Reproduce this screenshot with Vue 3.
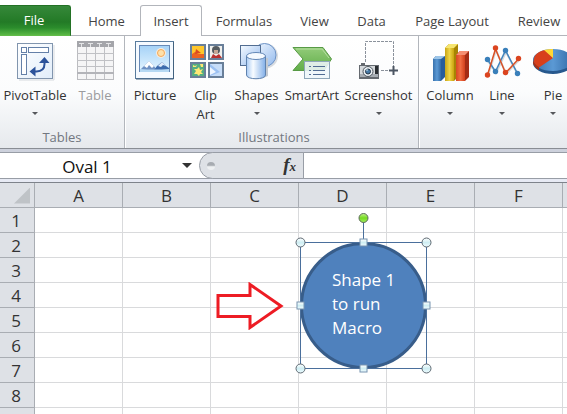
<script setup>
import { ref } from 'vue'

const tabs = ['File', 'Home', 'Insert', 'Formulas', 'View', 'Data', 'Page Layout', 'Review']
const active = ref('Insert')
const shapeName = ref('Oval 1')
const formula = ref('')

const groups = [
  {
    id: 'tables',
    label: 'Tables',
    tools: [
      { id: 'pivot', label: 'PivotTable', menu: true },
      { id: 'table', label: 'Table', disabled: true },
    ],
  },
  {
    id: 'illustrations',
    label: 'Illustrations',
    tools: [
      { id: 'picture', label: 'Picture' },
      { id: 'clip', label: 'Clip\nArt' },
      { id: 'shapes', label: 'Shapes', menu: true },
      { id: 'smart', label: 'SmartArt' },
      { id: 'screenshot', label: 'Screenshot', menu: true },
    ],
  },
  {
    id: 'charts',
    label: '',
    tools: [
      { id: 'column', label: 'Column', menu: true },
      { id: 'line', label: 'Line', menu: true },
      { id: 'pie', label: 'Pie', menu: true },
    ],
  },
]

const columns = ['A', 'B', 'C', 'D', 'E', 'F', '']
const rows = ['1', '2', '3', '4', '5', '6', '7', '8', '']
const corners = [[8, 32], [134, 32], [8, 158], [134, 158]]
const sides = [[71, 32], [8, 95], [134, 95], [71, 158]]
</script>

<template>
  <div class="app">
    <nav class="tabs">
      <button
        v-for="tab in tabs"
        :key="tab"
        type="button"
        class="tab"
        :class="{ file: tab === 'File', active: tab === active }"
        @click="active = tab"
      >{{ tab }}</button>
    </nav>

    <div class="ribbon">
      <section v-for="group in groups" :key="group.id" class="group" :class="group.id">
        <div class="tools">
          <button v-for="tool in group.tools" :key="tool.id" type="button" class="tool" :disabled="tool.disabled">
            <svg class="icon" viewBox="0 0 40 40" aria-hidden="true">
              <g v-if="tool.id === 'pivot'">
                <path d="M4 40h35V5" fill="none" stroke="#d5d9de" />
                <rect x="2.5" y="3.5" width="35" height="35" fill="url(#paper)" stroke="#8195ae" />
                <g fill="#fff" stroke="#6480a8">
                  <rect x="6.5" y="7.5" width="5" height="5" />
                  <rect x="13.5" y="7.5" width="20" height="5" />
                  <rect x="6.5" y="14.5" width="5" height="20" />
                </g>
                <path d="M29.5 20v4q0 7-8 7.5h-2" fill="none" stroke="#2c539b" stroke-width="2" />
                <path d="M24 23l5.5-6 5 6zM20.5 26.5l-6 5 6 5z" fill="#2c539b" />
              </g>
              <g v-else-if="tool.id === 'table'">
                <rect x="2.5" y="1.5" width="36" height="38" fill="#f5f5f6" stroke="#bbbcc0" />
                <path d="M2 1h37v6H2z" fill="#a4a5aa" />
                <path d="M11.5 7v32M20.5 7v32M29.5 7v32M2 13.5h37M2 20.5h37M2 26.5h37" stroke="#c0c1c5" />
                <path d="M2 33h37" stroke="#b3b4b9" stroke-width="2" />
                <path d="M4 3.5h5M13 3.5h5M22 3.5h5M31 3.5h5M6.5 3v4M15.5 3v4M24.5 3v4M33.5 3v4" stroke="#e4e5e7" />
              </g>
              <g v-else-if="tool.id === 'picture'">
                <rect x=".5" y="1.5" width="38" height="37" fill="#f5faff" stroke="#587b9d" />
                <path d="M38.5 2v37H1" fill="none" stroke="#42627f" />
                <rect x="4.5" y="5.5" width="30" height="26" fill="url(#sky)" stroke="#6789b6" />
                <circle cx="26" cy="13" r="5" fill="#f5ede0" />
                <circle cx="26" cy="13" r="3.5" fill="#ffe0a9" stroke="#f5a759" />
                <path d="M5 30l5-5 4-4 4 4 4 5z" fill="#6f91c3" />
                <path d="M9 26l5-5 5 5-2 2-3-3-2 3z" fill="#fff" />
                <path d="M19 30l3-4 5-4 4 4 3 2v2z" fill="#3e6cae" />
                <path d="M23 26l4-4 4 4-3-1-2 2z" fill="#e1ecfb" />
                <path d="M5 29q14 1 29 0v3H5z" fill="#b5d8f2" />
              </g>
              <g v-else-if="tool.id === 'clip'">
                <g stroke="#697f99" stroke-width="2">
                  <rect x="5" y="5" width="14" height="14" fill="#ffc72b" />
                  <rect x="23" y="5" width="14" height="14" fill="#f0f0ed" />
                  <rect x="5" y="23" width="14" height="14" fill="#55ad82" />
                  <rect x="23" y="23" width="14" height="14" fill="#c7ddf8" />
                </g>
                <path d="M6 14l3-2 3 2h6v4H6z" fill="#eb6321" /><path d="M10 9l5 4-6 1z" fill="#d94a20" />
                <circle cx="30" cy="10" r="4" fill="#555b60" /><path d="M28 10h4v4h-4z" fill="#c5a796" />
                <path d="M25 18l2-4 3 2 3-2 3 4z" fill="#b8302f" />
                <path d="M13 27l1 3 3-1-2 3 2 2h-3l-1 2-2-2h-3l2-3-2-2h3zM14 24h3v3h-2zM7 25l2 1 2-1-1 2H7z" fill="#ffe875" />
                <path d="M24 24l10 8-10 4z" fill="#9cc1f2" /><path d="M24 27l6 5-6 3z" fill="#eff6ff" />
              </g>
              <g v-else-if="tool.id === 'shapes'">
                <circle cx="28.5" cy="16" r="12.5" fill="#d9dce0" />
                <circle cx="27.5" cy="15" r="11.5" fill="url(#blue)" stroke="#6d93c6" />
                <rect x="3.5" y="5.5" width="20" height="20" fill="url(#blue)" stroke="#526d91" />
                <path d="M10 18v18q10 6 21 0V18z" fill="#c3c9d1" />
                <path d="M9.5 16v19c0 5 19 5 19 0V16" fill="url(#tube)" stroke="#5f82ae" />
                <ellipse cx="19" cy="16" rx="9.5" ry="3.5" fill="#f5faff" stroke="#6287b7" />
              </g>
              <g v-else-if="tool.id === 'smart'">
                <path d="M1 7.5h30l8.5 11.5L32 30.5H1L11 19z" fill="url(#green)" stroke="#579a45" />
                <path d="M4 9h26l7 9" fill="none" stroke="#b6dfa0" />
                <rect x="12.5" y="21.5" width="25" height="17" fill="#eef6fa" fill-opacity=".88" stroke="#8ea6b9" />
                <path d="M17 26.5h2M17 30.5h2M17 34.5h2M21 26.5h12M21 30.5h12M21 34.5h12" stroke="#526d94" />
              </g>
              <g v-else-if="tool.id === 'screenshot'">
                <path d="M6.5 22V1.5h28V27M22 30.5h7" fill="none" stroke="#8b929c" stroke-dasharray="3 1" />
                <path d="M34.5 26v9M30 30.5h9" stroke="#4c5663" stroke-width="2" />
                <path d="M2 23h4v2h14v14H0V25h2z" fill="#656a70" />
                <rect x="1" y="26" width="18" height="11" fill="#d4d8db" />
                <path d="M1 34h18v3H1z" fill="#a7adb3" />
                <path d="M16 26h3v8h-3z" fill="#292d31" />
                <circle cx="9" cy="31.5" r="5" fill="#e9eef2" stroke="#4e565e" />
                <circle cx="9" cy="31.5" r="2.5" fill="#4779a5" stroke="#263645" />
                <path d="M7 30h2" stroke="#d9f4ff" />
              </g>
              <g v-else-if="tool.id === 'column'">
                <path d="M3 19l3-3h9v21l-4 4H3z" fill="#285d9b" /><path d="M3 19h8v22H3z" fill="url(#blueBar)" /><path d="M3 19l3-3h9l-4 3z" fill="#9cc5e8" />
                <path d="M15 8l4-4h9v33l-4 4h-9z" fill="#a68404" /><path d="M15 8h9v33h-9z" fill="url(#goldBar)" /><path d="M15 8l4-4h9l-4 4z" fill="#f6e56f" />
                <path d="M26 15l4-4h9v26l-4 4h-9z" fill="#a42c15" /><path d="M26 15h9v26h-9z" fill="url(#redBar)" /><path d="M26 15l4-4h9l-4 4z" fill="#f68e71" />
              </g>
              <g v-else-if="tool.id === 'line'">
                <g fill="none" stroke="#d4d8db" stroke-width="2"><path d="M6 21l8 12L24 12l12 23M6 36l8-26 10 24 13-14" /></g>
                <path d="M5.5 19.5l8 12 10-21 12 23" fill="none" stroke="#4385bd" stroke-width="1.5" />
                <path d="M5.5 35l8-26 10 24 13-14" fill="none" stroke="#da5126" stroke-width="1.5" />
                <g fill="#397fba"><circle cx="5.5" cy="19.5" r="2.7" /><circle cx="13.5" cy="31.5" r="2.7" /><circle cx="23.5" cy="10.5" r="2.7" /><circle cx="35.5" cy="33.5" r="2.7" /></g>
                <g fill="#db441f"><circle cx="5.5" cy="35" r="2.7" /><circle cx="13.5" cy="8" r="2.7" /><circle cx="23.5" cy="32.5" r="2.7" /><circle cx="36.5" cy="18.5" r="2.7" /></g>
              </g>
              <g v-else>
                <ellipse cx="20" cy="23" rx="20" ry="11" fill="#27588d" />
                <ellipse cx="20" cy="20" rx="20" ry="11" fill="url(#blueBar)" />
                <path d="M20 18L6 27.500C-3 23 0 12 12 10z" fill="#d83f1b" />
                <path d="M20 18L11 10q4-1 9-1z" fill="#ffd735" />
                <path d="M0 20v3q1 4 6 7v-3q-5-3-6-7" fill="#aa3015" />
              </g>
            </svg>
            <span class="caption">{{ tool.label }}</span>
            <i v-if="tool.menu" class="caret"></i>
          </button>
        </div>
        <div class="group-label">{{ group.label }}</div>
      </section>
    </div>

    <div class="formula-bar">
      <input v-model="shapeName" class="name-box" aria-label="Name box" />
      <button type="button" class="name-menu" aria-label="Choose name"><i></i></button>
      <div class="fx-area">
        <i class="knob"></i>
        <button type="button" class="fx" aria-label="Insert function"><span>f</span><small>x</small></button>
      </div>
      <input v-model="formula" class="formula" aria-label="Formula" />
    </div>

    <main class="sheet">
      <table>
        <thead>
          <tr>
            <th class="corner"><i></i></th>
            <th v-for="(col, c) in columns" :key="c" scope="col">{{ col }}</th>
          </tr>
        </thead>
        <tbody>
          <tr v-for="(row, r) in rows" :key="r">
            <th scope="row">{{ row }}</th>
            <td v-for="(col, c) in columns" :key="c"></td>
          </tr>
        </tbody>
      </table>

      <svg class="arrow" viewBox="0 0 68 48" aria-hidden="true">
        <path d="M2 13.5h32v-11L65 24 34 45.5v-11H2z" fill="none" stroke="#ed1c24" stroke-width="3" />
      </svg>

      <div class="shape">
        <svg viewBox="0 0 142 166" aria-hidden="true">
          <circle cx="71.5" cy="95.5" r="62" fill="#4f81bd" stroke="#385d8a" stroke-width="3" />
          <path d="M71.5 8v24M8.5 32.5h126v126h-126z" fill="none" stroke="#4a6f9c" />
          <circle cx="71.5" cy="8" r="4.5" fill="url(#spin)" stroke="#5d6b5b" />
          <circle v-for="[x, y] in corners" :key="`c${x}-${y}`" :cx="x + 0.5" :cy="y + 0.5" r="4.5" fill="url(#handle)" stroke="#5f6972" />
          <rect v-for="[x, y] in sides" :key="`s${x}-${y}`" :x="x - 3" :y="y - 3" width="7" height="7" fill="url(#handle)" stroke="#7793b0" />
        </svg>
        <p>Shape 1<br />to run<br />Macro</p>
      </div>
    </main>

    <svg class="defs" width="0" height="0" aria-hidden="true">
      <defs>
        <linearGradient id="paper" x1="0" y1="0" x2="1" y2="1"><stop stop-color="#fff" /><stop offset="1" stop-color="#e1edfa" /></linearGradient>
        <linearGradient id="sky" x1="0" y1="0" x2="0" y2="1"><stop stop-color="#a5d2f7" /><stop offset="1" stop-color="#e5f5ff" /></linearGradient>
        <linearGradient id="blue" x1="0" y1="0" x2="1" y2="1"><stop stop-color="#f5faff" /><stop offset="1" stop-color="#92b9ed" /></linearGradient>
        <linearGradient id="tube"><stop stop-color="#a9cbf4" /><stop offset=".35" stop-color="#f8fcff" /><stop offset="1" stop-color="#82afe8" /></linearGradient>
        <linearGradient id="green" x1="0" y1="0" x2="0" y2="1"><stop stop-color="#92cb79" /><stop offset="1" stop-color="#61ae49" /></linearGradient>
        <linearGradient id="blueBar"><stop stop-color="#3972ad" /><stop offset=".5" stop-color="#5b99d4" /><stop offset="1" stop-color="#326aa6" /></linearGradient>
        <linearGradient id="goldBar"><stop stop-color="#c9a516" /><stop offset=".5" stop-color="#efd548" /><stop offset="1" stop-color="#c8a20d" /></linearGradient>
        <linearGradient id="redBar"><stop stop-color="#d64922" /><stop offset=".5" stop-color="#f06c42" /><stop offset="1" stop-color="#d23f1b" /></linearGradient>
        <linearGradient id="handle" x1="0" y1="0" x2="0" y2="1"><stop stop-color="#fff" /><stop offset=".5" stop-color="#cfeef3" /><stop offset="1" stop-color="#effcff" /></linearGradient>
        <linearGradient id="spin" x1="0" y1="0" x2="0" y2="1"><stop stop-color="#c1f08e" /><stop offset=".5" stop-color="#75dc20" /><stop offset="1" stop-color="#a2ed62" /></linearGradient>
      </defs>
    </svg>
  </div>
</template>

<style>
body { margin: 0; overflow: hidden; }
</style>

<style scoped>
* { box-sizing: border-box; }
.app {
  display: flex;
  flex-direction: column;
  height: 100vh;
  overflow: hidden;
  background: #fff;
  color: #333;
  font-family: "Open Sans", "Noto Sans", sans-serif;
  font-size: 13px;
}
button, input { font: inherit; color: inherit; border: 0; padding: 0; margin: 0; background: none; border-radius: 0; outline: 0; }
.tabs {
  display: grid;
  flex: none;
  grid-template-columns: 71px 71px 60px 84px 57px 57px 104px 70px;
  padding-top: 5px;
  height: 36px;
  background: linear-gradient(#b2b5bb, #b2b5bb) bottom / 100% 1px no-repeat;
}
.tab { height: 31px; line-height: 32px; white-space: nowrap; text-align: center; color: #444; }
.tab.active { margin-left: -2px; line-height: 30px; background: #fff; border: 1px solid #b2b5bb; border-bottom: 0; border-radius: 3px 3px 0 0; }
.tab.file {
  color: #fff;
  padding-right: 2px;
  line-height: 29px;
  border: 1px solid #237125;
  border-left: 0;
  border-bottom-color: #62bb49;
  border-radius: 0 3px 0 0;
  background: linear-gradient(#36883a, #237a26 55%, #2b8c2c 75%, #5ab844);
}
.ribbon {
  display: flex;
  flex: none;
  height: 113px;
  border-bottom: 1px solid #898d94;
  background: linear-gradient(#fff, #fbfcfd 50%, #e6e9ed);
}
.group { display: flex; flex: none; flex-direction: column; border-right: 1px solid #b2b6bc; box-shadow: 1px 0 #fff; }
.group.tables { width: 125px; }
.group.illustrations { width: 294px; padding-left: 5px; }
.group.charts { flex: 1; min-width: 0; padding-left: 5px; border-right: 0; }
.tools { display: grid; height: 92px; padding-top: 4px; }
.tables .tools { grid-template-columns: 70px 50px; }
.illustrations .tools { grid-template-columns: 50px 51px 51px 60px 73px; }
.charts .tools { grid-template-columns: 52px 52px 50px; }
.tool { display: flex; flex-direction: column; align-items: center; justify-content: flex-start; }
.tool:disabled { color: #9b9b9d; }
.icon { width: 40px; height: 40px; flex: none; overflow: visible; }
.caption { margin-top: 6px; line-height: 19px; white-space: pre; }
.caret { width: 0; margin-top: 7px; border: 3px solid transparent; border-top-color: #55575b; border-bottom: 0; }
.group-label { height: 18px; line-height: 18px; text-align: center; color: #727780; }
.formula-bar {
  display: flex;
  flex: none;
  height: 34px;
  padding-bottom: 3px;
  border-bottom: 1px solid #7e838b;
  border-top: 3px solid #cdd1dc;
  background: linear-gradient(#989da6, #989da6) bottom 3px left / 100% 1px no-repeat, #fff;
  box-shadow: inset 0 1px #989da6, inset 0 -3px #e7eaf4;
  font-size: 17px;
}
.name-box { width: 174px; height: 27px; padding-top: 1px; text-align: center; color: #111; background: none; }
.name-menu { width: 25px; display: grid; place-items: center; }
.name-menu i { border: 5px solid transparent; border-top-color: #333; border-bottom: 0; }
.fx-area {
  display: flex;
  align-items: center;
  justify-content: space-between;
  width: 105px;
  height: 27px;
  padding: 0 7px;
  border: 1px solid #989da6;
  border-radius: 14px 0 0 14px;
  background: #dee1e6;
}
.knob { width: 8px; height: 8px; border-radius: 4px; background: linear-gradient(#a7abb1 40%, #eef0f2 60%); }
.fx { font-family: "Liberation Serif", serif; font-size: 19px; font-style: italic; font-weight: bold; line-height: 20px; }
.fx small { font-size: 13px; }
.formula { flex: 1; min-width: 0; padding-left: 6px; }
.sheet { position: relative; flex: 1; min-height: 0; overflow: hidden; }
table { width: 651px; table-layout: fixed; border-collapse: separate; border-spacing: 0; font-size: 17px; }
th, td { width: 88px; height: 25px; padding: 0; border: 0 solid #d9dadc; border-width: 0 1px 1px 0; line-height: 24px; }
th { padding-top: 1px; line-height: 23px; font-weight: normal; background: #dee1e6; border-color: #a9adb3; }
.corner, tbody th { width: 35px; }
tbody th { padding-right: 2px; }
.corner i { display: block; width: 16px; height: 16px; margin-left: 14px; background: #bfc3c7; clip-path: polygon(100% 0, 100% 100%, 0 100%); }
.arrow { position: absolute; left: 216px; top: 99px; width: 68px; height: 48px; }
.shape { position: absolute; left: 292px; top: 27px; width: 142px; height: 166px; }
.shape svg { display: block; width: 100%; height: 100%; }
.shape p { position: absolute; left: 40px; top: 58px; margin: 0; color: #fff; font-size: 17px; line-height: 24px; white-space: nowrap; }
.defs { position: absolute; }
</style>
